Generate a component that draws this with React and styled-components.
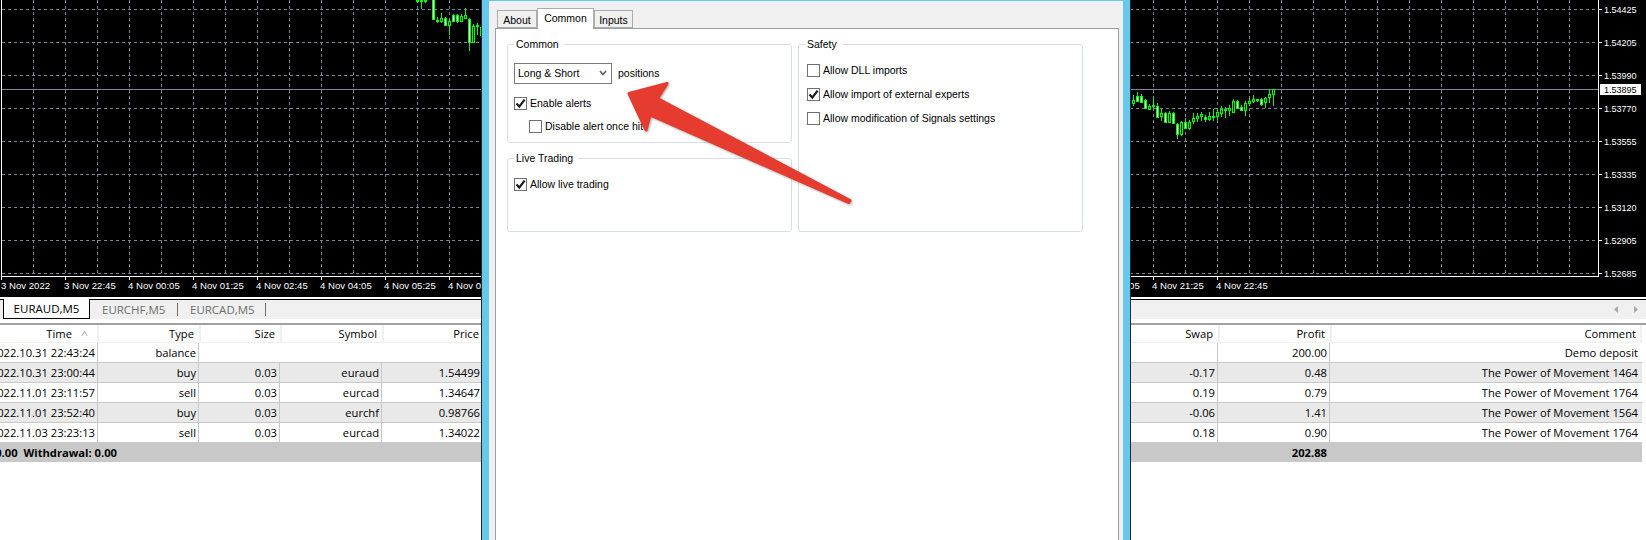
import styled, { createGlobalStyle } from "styled-components";

const GlobalStyle = createGlobalStyle`
  html, body {
    margin: 0;
    padding: 0;
    background: #fff;
  }
  * {
    box-sizing: border-box;
  }
`;

const uiFont = `"Liberation Sans", sans-serif`;
const tableFont = `"Open Sans", "Liberation Sans", sans-serif`;
const chartFont = `"Liberation Sans", sans-serif`;

// price levels and time scale of the chart
const levels = [
  [9, "1.54425"],
  [42, "1.54205"],
  [75, "1.53990"],
  [108, "1.53770"],
  [141, "1.53555"],
  [174, "1.53335"],
  [207, "1.53120"],
  [240, "1.52905"],
  [273, "1.52685"],
];
const gridX = Array.from({ length: 49 }, (_, i) => 33 + i * 32);
const timeLabels = [
  [1, 1, "3 Nov 2022"],
  [65, 64, "3 Nov 22:45"],
  [129, 128, "4 Nov 00:05"],
  [193, 192, "4 Nov 01:25"],
  [257, 256, "4 Nov 02:45"],
  [321, 320, "4 Nov 04:05"],
  [385, 384, "4 Nov 05:25"],
  [449, 448, "4 Nov 06:45"],
  [1089, 1088, "4 Nov 20:05"],
  [1153, 1152, "4 Nov 21:25"],
  [1217, 1216, "4 Nov 22:45"],
];

// x, high, low, body top, body bottom, white body (measured at 3x)
const leftCandles = [
  [22, -4, 10, 0, 2, 0],
  [34, -4, 26, 0, 3, 0],
  [46, -4, 10, 0, 1, 0],
  [70, -4, 60, -2, 58, 1],
  [82, 52, 68, 60, 61, 0],
  [94, 40, 70, 55, 62, 0],
  [106, 50, 78, 55, 75, 1],
  [118, 58, 105, 64, 74, 0],
  [130, 42, 65, 46, 62, 1],
  [142, 42, 70, 46, 64, 1],
  [154, 42, 66, 48, 62, 0],
  [166, 25, 58, 46, 54, 0],
  [178, 55, 152, 58, 125, 1],
  [190, 72, 127, 78, 125, 0],
  [202, 70, 105, 76, 78, 0],
  [214, 78, 108, 80, 106, 1],
];
const rightCandles = [
  [16, 30, 62, 45, 53, 0],
  [28, 22, 52, 34, 48, 1],
  [40, 28, 54, 34, 50, 1],
  [52, 42, 72, 46, 68, 1],
  [64, 58, 72, 64, 71, 0],
  [76, 36, 72, 60, 62, 0],
  [88, 55, 98, 64, 95, 1],
  [100, 72, 108, 85, 94, 0],
  [112, 80, 112, 84, 110, 1],
  [124, 78, 115, 85, 110, 0],
  [136, 80, 118, 85, 115, 1],
  [148, 115, 162, 118, 148, 1],
  [160, 108, 152, 112, 148, 0],
  [172, 98, 132, 112, 130, 1],
  [184, 105, 135, 112, 130, 0],
  [196, 85, 118, 100, 108, 0],
  [208, 85, 112, 92, 100, 0],
  [220, 82, 108, 88, 94, 0],
  [232, 90, 112, 97, 103, 1],
  [244, 80, 108, 92, 103, 0],
  [256, 72, 108, 92, 94, 0],
  [268, 70, 105, 82, 94, 0],
  [280, 62, 95, 72, 85, 0],
  [292, 65, 98, 72, 74, 0],
  [304, 60, 92, 70, 76, 0],
  [316, 42, 82, 48, 80, 0],
  [328, 45, 72, 48, 68, 1],
  [340, 60, 78, 67, 76, 1],
  [352, 48, 92, 55, 76, 0],
  [364, 38, 62, 48, 55, 0],
  [376, 30, 55, 42, 47, 0],
  [388, 42, 52, 43, 45, 0],
  [400, 38, 62, 42, 56, 1],
  [412, 35, 68, 40, 52, 0],
  [424, 12, 55, 28, 35, 0],
  [436, 12, 62, 13, 28, 0],
];

function Candles({ data, left, top }) {
  return data.map(([x, hi, lo, bt, bb, white]) => {
    const cx = Math.round(left + x / 3) + 0.5;
    const y = (v) => Math.round(top + v / 3);
    return (
      <g key={x} stroke="#00ff00" strokeWidth="1">
        <line x1={cx} x2={cx} y1={y(hi)} y2={y(lo)} />
        <rect
          x={cx - 1}
          y={y(bt) + 0.5}
          width="2"
          height={Math.max(y(bb) - y(bt), 1)}
          fill={white ? "#ffffff" : "#000000"}
        />
      </g>
    );
  });
}

function PriceChart() {
  return (
    <ChartSvg viewBox="0 0 1646 297" width="1646" height="297">
      <rect width="1646" height="297" fill="#000" />
      <g stroke="#778899" strokeWidth="1" strokeDasharray="3 3">
        {levels.map(([y]) => (
          <line key={y} x1="2" x2="1598" y1={y + 0.5} y2={y + 0.5} />
        ))}
        {gridX.map((x) => (
          <line key={x} x1={x + 0.5} x2={x + 0.5} y1="0" y2="276" />
        ))}
      </g>
      <line x1="2" x2="1598" y1="89.5" y2="89.5" stroke="#778899" />
      <Candles data={leftCandles} left={410} top={0} />
      <Candles data={rightCandles} left={1128} top={85} />
      <g stroke="#ffffff" strokeWidth="1">
        <line x1="1.5" x2="1.5" y1="0" y2="277" />
        <line x1="1" x2="1599" y1="276.5" y2="276.5" />
        <line x1="1598.5" x2="1598.5" y1="0" y2="277" />
        {timeLabels.map(([tick]) => (
          <line key={tick} x1={tick + 0.5} x2={tick + 0.5} y1="276" y2="280" />
        ))}
        {levels.map(([y]) => (
          <line key={y} x1="1598" x2="1602" y1={y + 0.5} y2={y + 0.5} />
        ))}
      </g>
      <g fill="#ffffff" fontFamily={chartFont}>
        {timeLabels.map(([tick, x, label]) => (
          <text key={tick} x={x} y="289" fontSize="9.6">
            {label}
          </text>
        ))}
        {levels.map(([y, label]) => (
          <text key={label} x="1604" y={y + 4} fontSize="9">
            {label}
          </text>
        ))}
      </g>
      <rect x="1600" y="84" width="41" height="11" fill="#ffffff" />
      <text x="1604" y="93" fill="#000" fontFamily={chartFont} fontSize="9">
        1.53895
      </text>
    </ChartSvg>
  );
}

const rowCols = "98px 101px 81px 102px 101px 1fr 100px 112px 312px";
const headCols = "99px 102px 81px 102px 102px 1fr 100px 112px 310px";

const rows = [
  ["2022.10.31 22:43:24", "balance", "", "", "", "", "200.00", "Demo deposit"],
  ["2022.10.31 23:00:44", "buy", "0.03", "euraud", "1.54499", "-0.17", "0.48", "The Power of Movement 1464"],
  ["2022.11.01 23:11:57", "sell", "0.03", "eurcad", "1.34647", "0.19", "0.79", "The Power of Movement 1764"],
  ["2022.11.01 23:52:40", "buy", "0.03", "eurchf", "0.98766", "-0.06", "1.41", "The Power of Movement 1564"],
  ["2022.11.03 23:23:13", "sell", "0.03", "eurcad", "1.34022", "0.18", "0.90", "The Power of Movement 1764"],
];

function Check({ checked, indent, children }) {
  return (
    <CheckRow $indent={indent}>
      <Box>
        {checked && (
          <svg width="11" height="11" viewBox="0 0 11 11">
            <path d="M1.5 5.5 L4.3 8.6 L9.6 1.6" fill="none" stroke="#1a1a1a" strokeWidth="2.2" />
          </svg>
        )}
      </Box>
      <CheckText>{children}</CheckText>
    </CheckRow>
  );
}

export default function App() {
  return (
    <>
      <GlobalStyle />
      <Page>
        <PriceChart />
        <TabStrip>
          <TabRow>
            <ActiveChartTab>EURAUD,M5</ActiveChartTab>
            <ChartTab>EURCHF,M5</ChartTab>
            <TabDivider />
            <ChartTab>EURCAD,M5</ChartTab>
            <TabDivider />
            <ScrollArrows>
              <svg width="5" height="7" viewBox="0 0 5 7">
                <path d="M4 0 L0 3.5 L4 7 Z" fill="#a8a8a8" />
              </svg>
              <svg width="5" height="7" viewBox="0 0 5 7">
                <path d="M1 0 L5 3.5 L1 7 Z" fill="#a8a8a8" />
              </svg>
            </ScrollArrows>
          </TabRow>
        </TabStrip>

        <HeadRow>
          <HeadCell $pad={9}>
            Time
            <SortMark width="7" height="7" viewBox="0 0 7 7">
              <path d="M6 6 L3.5 1 L1 6" fill="none" stroke="#b0b0b0" />
            </SortMark>
          </HeadCell>
          <HeadCell>Type</HeadCell>
          <HeadCell>Size</HeadCell>
          <HeadCell>Symbol</HeadCell>
          <HeadCell>Price</HeadCell>
          <HeadCell />
          <HeadCell>Swap</HeadCell>
          <HeadCell>Profit</HeadCell>
          <HeadCell $pad={4}>Comment</HeadCell>
        </HeadRow>
        {rows.map((r, i) => (
          <DealRow key={r[0]} $shaded={i % 2 === 1}>
            <Cell>{r[0]}</Cell>
            <Cell>{r[1]}</Cell>
            <Cell $open={i === 0}>{r[2]}</Cell>
            <Cell $open={i === 0}>{r[3]}</Cell>
            <Cell $open={i === 0}>{r[4]}</Cell>
            <Cell $open />
            <Cell>{r[5]}</Cell>
            <Cell>{r[6]}</Cell>
            <Cell $open $pad={3}>
              {r[7]}
            </Cell>
          </DealRow>
        ))}
        <TotalRow>
          <TotalCell $pad={0}>0.00&nbsp; Withdrawal: 0.00</TotalCell>
          <span />
          <TotalCell $pad={3}>202.88</TotalCell>
          <span />
        </TotalRow>

        <Dialog>
          <Client>
            <DialogTabs>
              <DialogTab $width={40}>About</DialogTab>
              <DialogTab $width={57} $active>
                Common
              </DialogTab>
              <DialogTab $width={39}>Inputs</DialogTab>
            </DialogTabs>
            <Panel>
              <GroupColumn>
                <Group $height={106}>
                  <legend>Common</legend>
                  <SelectLine>
                    <FakeSelect>
                      Long &amp; Short
                      <svg width="8" height="6" viewBox="0 0 8 6">
                        <path d="M1 1 L4 4.5 L7 1" fill="none" stroke="#606060" strokeWidth="1.6" />
                      </svg>
                    </FakeSelect>
                    <PositionsText>positions</PositionsText>
                  </SelectLine>
                  <Check checked>Enable alerts</Check>
                  <Check indent>Disable alert once hit</Check>
                </Group>
                <Group $height={81}>
                  <legend>Live Trading</legend>
                  <LiveBody>
                    <Check checked>Allow live trading</Check>
                  </LiveBody>
                </Group>
              </GroupColumn>
              <Group $height={195}>
                <legend>Safety</legend>
                <SafetyBody>
                  <Check>Allow DLL imports</Check>
                  <Check checked>Allow import of external experts</Check>
                  <Check>Allow modification of Signals settings</Check>
                </SafetyBody>
              </Group>
            </Panel>
          </Client>
        </Dialog>

        <ArrowOverlay width="1646" height="540" viewBox="0 0 1646 540">
          <polygon
            points="629,93.5 667,83.5 657.5,98.5 850,200.5 848.5,202.5 650,115 646,130"
            fill="#e63c30"
            stroke="#e63c30"
            strokeWidth="3"
            strokeLinejoin="round"
          />
        </ArrowOverlay>
      </Page>
    </>
  );
}

const Page = styled.div`
  position: relative;
  width: 1646px;
  height: 540px;
  overflow: hidden;
  background: #fff;
  font-family: ${tableFont};
  font-size: 11.2px;
  color: #000;
`;

const ChartSvg = styled.svg`
  display: block;
`;

const TabStrip = styled.div`
  margin-top: 2px;
  height: 26px;
  border-top: 1px solid #000;
  border-bottom: 2px solid #a0a0a0;
  background: #fff;
`;

const TabRow = styled.div`
  display: flex;
  align-items: center;
  height: 19px;
  padding-left: 3px;
  background: #f0f0f0;
`;

const ChartTab = styled.div`
  width: 87px;
  padding-left: 12px;
  font-size: 11.5px;
  color: #6d6d6d;
`;

const ActiveChartTab = styled.div`
  width: 87px;
  height: 20px;
  margin-top: -1px;
  text-align: center;
  line-height: 19px;
  font-size: 11.5px;
  color: #000;
  background: #fff;
  border: 1px solid #000;
  border-top: 0;
`;

const TabDivider = styled.div`
  width: 1px;
  height: 13px;
  background: #707070;
`;

const ScrollArrows = styled.div`
  display: flex;
  gap: 14px;
  margin-left: auto;
  margin-right: 8px;
`;

const HeadRow = styled.div`
  display: grid;
  grid-template-columns: ${headCols};
  width: 1642px;
  height: 18px;
  background: #fff;
`;

const HeadCell = styled.div`
  display: flex;
  align-items: center;
  justify-content: flex-end;
  padding-right: ${(p) => p.$pad || 5}px;
  border-right: 2px solid #f0f0f0;
  border-bottom: 1px solid #f0f0f0;
  white-space: nowrap;
`;

const SortMark = styled.svg`
  margin-left: 9px;
`;

const DealRow = styled.div`
  display: grid;
  grid-template-columns: ${rowCols};
  width: 1642px;
  height: 20px;
  background: ${(p) => (p.$shaded ? "#e9e9e9" : "#fff")};
  border-bottom: 1px solid #c8c8c8;
`;

const Cell = styled.div`
  display: flex;
  align-items: center;
  justify-content: flex-end;
  padding-right: ${(p) => p.$pad || 2}px;
  white-space: nowrap;
  border-right: 1px solid ${(p) => (p.$open ? "transparent" : "#c8c8c8")};
`;

const TotalRow = styled.div`
  display: grid;
  grid-template-columns: 117px 1fr 112px 312px;
  margin-top: -1px;
  width: 1642px;
  height: 20px;
  background: #c8c8c8;
`;

const TotalCell = styled.div`
  display: flex;
  align-items: center;
  justify-content: flex-end;
  padding-right: ${(p) => p.$pad}px;
  white-space: nowrap;
  font-weight: 700;
`;

const Dialog = styled.div`
  position: absolute;
  top: 0;
  left: 481px;
  width: 650px;
  height: 540px;
  padding: 1px 7px 0;
  background: #66c8eb;
  border-left: 1px solid #1b2a33;
  border-right: 1px solid #1b2a33;
  font-family: ${uiFont};
  font-size: 10.5px;
`;

const Client = styled.div`
  height: 100%;
  padding: 6px 4px 0 6px;
  background: #f0f0f0;
`;

const DialogTabs = styled.div`
  display: flex;
  align-items: flex-end;
  height: 21px;
  padding-left: 2px;
  position: relative;
  z-index: 1;
`;

const DialogTab = styled.div`
  width: ${(p) => p.$width}px;
  height: ${(p) => (p.$active ? 21 : 18)}px;
  margin-bottom: ${(p) => (p.$active ? -1 : 0)}px;
  text-align: center;
  line-height: 18px;
  background: ${(p) => (p.$active ? "#fff" : "#f0f0f0")};
  border: 1px solid #acacac;
  border-bottom: ${(p) => (p.$active ? "0" : "1px solid #acacac")};
`;

const Panel = styled.div`
  display: flex;
  align-items: flex-start;
  gap: 6px;
  height: 520px;
  padding: 8px 0 0 11px;
  background: #fff;
  border: 1px solid #9a9ea5;
`;

const GroupColumn = styled.div`
  display: flex;
  flex-direction: column;
  gap: 8px;
`;

const Group = styled.fieldset`
  width: 285px;
  height: ${(p) => p.$height}px;
  margin: 0;
  padding: 0 0 0 6px;
  border: 1px solid #d5dfe5;
  border-radius: 3px;

  legend {
    padding: 0 5px 0 2px;
    line-height: 14px;
    color: #000;
  }
`;

const SelectLine = styled.div`
  display: flex;
  align-items: center;
  gap: 6px;
  margin: 12px 0 13px;
`;

const FakeSelect = styled.div`
  display: flex;
  align-items: center;
  justify-content: space-between;
  width: 98px;
  height: 21px;
  padding: 0 4px 1px 3px;
  background: #fff;
  border: 1px solid #7a7a7a;
`;

const PositionsText = styled.span`
  margin-bottom: 2px;
`;

const CheckRow = styled.div`
  display: flex;
  align-items: center;
  gap: 3px;
  height: 13px;
  margin-left: ${(p) => (p.$indent ? 15 : 0)}px;
  margin-top: ${(p) => (p.$indent ? 10 : 0)}px;
  white-space: nowrap;
`;

const CheckText = styled.span`
  margin-bottom: 2px;
`;

const Box = styled.div`
  display: flex;
  align-items: center;
  justify-content: center;
  width: 13px;
  height: 13px;
  flex: none;
  background: #fff;
  border: 1px solid #707070;
`;

const LiveBody = styled.div`
  padding-top: 13px;
`;

const SafetyBody = styled.div`
  display: flex;
  flex-direction: column;
  gap: 11px;
  padding: 13px 0 0 2px;
`;

const ArrowOverlay = styled.svg`
  position: absolute;
  top: 0;
  left: 0;
  pointer-events: none;
  filter: drop-shadow(1px 1px 1px rgba(90, 90, 90, 0.55));
`;
